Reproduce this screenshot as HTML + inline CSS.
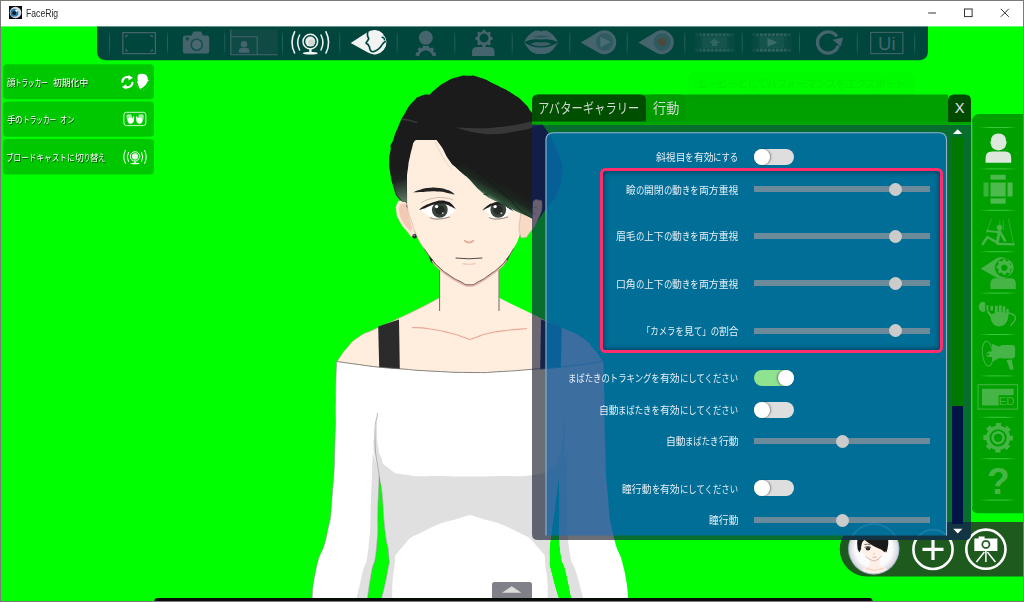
<!DOCTYPE html>
<html lang="ja">
<head>
<meta charset="utf-8">
<title>FaceRig</title>
<style>
html,body{margin:0;padding:0;}
body{width:1024px;height:602px;position:relative;overflow:hidden;background:#00ff00;font-family:"Liberation Sans","Noto Sans CJK JP",sans-serif;}
.abs{position:absolute;}
#title{left:25.6px;top:5.6px;font-size:11px;color:#2a2a2a;line-height:14px;white-space:nowrap;transform-origin:left center;transform:scaleX(0.785);}
.ltxt{left:7px;font-size:9px;line-height:11px;color:#fff;white-space:nowrap;text-shadow:0.8px 0.8px 0 #0f3a0f;}
.pc{display:inline-block;white-space:pre;vertical-align:top;}
.pc>span{display:inline-block;transform-origin:left center;white-space:pre;}
#dialog{left:0;top:0;width:1024px;height:602px;}
.jp{font-family:"Liberation Sans","Noto Sans CJK JP",sans-serif;}
.tab{position:absolute;top:99px;font-size:14px;line-height:18px;color:#d2dad2;white-space:nowrap;transform-origin:left center;}
#closex{left:948.2px;top:99px;width:23px;text-align:center;font-size:14.6px;line-height:18px;color:#e6e6e6;}
#tip{left:697.7px;top:77.3px;font-size:11px;line-height:14px;color:#00ec00;white-space:nowrap;transform-origin:left center;transform:scaleX(0.9);}
#hl{left:599.5px;top:168px;width:343px;height:184.5px;box-sizing:border-box;border:3.4px solid #ff2d6c;border-radius:5.5px;box-shadow:inset 0 0 5px 1px rgba(0,20,50,.55);}
.row{position:absolute;right:285.6px;font-size:10.3px;line-height:12px;color:#e6eff5;white-space:nowrap;transform-origin:right center;}
.track{position:absolute;left:754px;width:176px;height:6px;background:#6b8b9a;}
.knob{position:absolute;width:13px;height:13px;border-radius:50%;background:#cbcbcb;}
.tog{position:absolute;left:754px;width:40px;height:16px;border-radius:8px;background:#dedede;}
.tog.on{background:#8fe28f;}
.tog i{position:absolute;top:0;width:16px;height:16px;border-radius:50%;background:#fff;box-shadow:1px 0 2px rgba(0,0,0,.4);}
.tog.on i{box-shadow:-1px 0 2px rgba(0,0,0,.4);}
</style>
</head>
<body>
<!-- SCENE -->
<svg class="abs" id="scene" style="left:0;top:0" width="1024" height="602" viewBox="0 0 1024 602">
<defs>
<linearGradient id="hairfade" gradientUnits="userSpaceOnUse" x1="396" y1="170" x2="405" y2="201"><stop offset="0" stop-color="#1b1b1b"/><stop offset="0.3" stop-color="#1d211e"/><stop offset="1" stop-color="#5a7862"/></linearGradient>
<linearGradient id="hairfade2" gradientUnits="userSpaceOnUse" x1="0" y1="195" x2="0" y2="220"><stop offset="0" stop-color="#1b1b1b"/><stop offset="0.3" stop-color="#1b1b1b"/><stop offset="1" stop-color="#4a6650"/></linearGradient>
<linearGradient id="bandfade" gradientUnits="userSpaceOnUse" x1="510" y1="187" x2="500" y2="205"><stop offset="0" stop-color="#1b1b1b"/><stop offset="0.45" stop-color="#1c261f"/><stop offset="0.8" stop-color="#244630" stop-opacity="0.96"/><stop offset="1" stop-color="#386a48" stop-opacity="0.7"/></linearGradient>
<filter id="fBody" x="0" y="0" width="100%" height="100%" color-interpolation-filters="sRGB"><feColorMatrix type="matrix" values="0.39 0 0 0 0.03  0 0.35 0 0 0.08  0.14 -0.08 0.14 0 0.26  0 0 0 1 0"/></filter>
<filter id="fPanel" x="0" y="0" width="100%" height="100%" color-interpolation-filters="sRGB"><feColorMatrix type="matrix" values="0.235 0 0 0 0  0 0.06 0 0 0.372  0.04 0 0 0 0.588  0 0 0 1 0"/></filter>
<clipPath id="cBody"><path d="M532 124.4 H971 V534 Q971 540 965 540 H538 Q532 540 532 534 Z"/></clipPath>
<clipPath id="cPanel"><path d="M545.5 535.5 V140.3 Q545.5 132.3 553.5 132.3 H939 Q947 132.3 947 140.3 V535.5 Z"/></clipPath>
<clipPath id="thumbclip"><circle cx="873.8" cy="548.8" r="25"/></clipPath>
<radialGradient id="thumbbg" gradientUnits="userSpaceOnUse" cx="873.8" cy="548.8" r="25.6"><stop offset="0" stop-color="#ffffff"/><stop offset="0.72" stop-color="#fbfbfb"/><stop offset="1" stop-color="#cfd0d8"/></radialGradient>
<g id="bbar">
<!-- ============ BOTTOM BAR ============ -->
<path id="bbarbg" d="M867 522 H1024 V576.5 H867 A27.25 27.25 0 0 1 867 522 Z" fill="#1e5a1e"/>
<!-- overlap of dialog over bottom bar -->
<!-- thumb -->
<circle cx="873.8" cy="548.8" r="25.6" fill="url(#thumbbg)"/>
<g clip-path="url(#thumbclip)">
<path d="M853 582 Q855 570.5 865.5 567.8 L869.7 564.8 V556 H879.6 V564.8 L883.8 567.8 Q894 570.5 896 582 Z" fill="#fdeee6"/>
<path d="M866 568.6 Q871 569 874.6 570.6 Q878 569 883.5 568.6" fill="none" stroke="#eeb4a4" stroke-width="0.6"/>
<path d="M857.6 549 Q855.5 537 862 531.5 Q868 526.5 876 527.5 Q885 529.5 888 538 Q889 545 886.4 552.5 L884 549 L861 549 L859.4 552.5 Z" fill="#1a1a1a"/>
<path d="M860.8 540 V547 Q861.6 552.4 865.6 556.6 Q870 560.4 874.4 561 Q878.8 559.6 881.6 556 Q884.6 551.6 884.9 546 V540 Z" fill="#fff0e8"/>
<path d="M865.6 556.6 Q870 560.4 874.4 561 Q878.8 559.6 881.6 556" fill="none" stroke="#b08070" stroke-width="0.5"/>
<path d="M859.6 551 L858.2 544 Q858.6 538 863 537.4 L864.8 540 Q861.8 541 861.4 546 Z" fill="#1a1a1a"/>
<path d="M863 537.6 Q872 536 884.9 539 L886.8 546 L885.2 552.6 Q883.6 551.4 881.2 549.4 Q872.5 546.4 865 540.2 Z" fill="#1a1a1a"/>
<ellipse cx="868" cy="548.8" rx="2.3" ry="1.7" fill="#2a2a2a"/>
<path d="M864.6 547.4 Q867.6 545.6 871 547.4" fill="none" stroke="#222" stroke-width="0.8"/>
<path d="M864.4 544.6 Q867.6 543.6 870.6 544.8" fill="none" stroke="#333" stroke-width="0.7"/>
<path d="M873.2 553.6 Q874 554.4 874.8 553.6" fill="none" stroke="#e8a090" stroke-width="0.8"/>
<path d="M872.6 557.2 H876.6" stroke="#c08878" stroke-width="0.6"/>
</g>
<circle cx="873.8" cy="548.8" r="25.2" fill="none" stroke="#6a86c0" stroke-width="0.8" opacity="0.6"/>
<!-- plus -->
<circle cx="933" cy="549.4" r="19.6" fill="none" stroke="#fff" stroke-width="2.6"/>
<path d="M922.5 549.4 H943.5 M933 538.9 V559.9" stroke="#fff" stroke-width="3.2" fill="none"/>
<!-- camera tripod -->
<circle cx="985.9" cy="549.2" r="19.6" fill="none" stroke="#fff" stroke-width="2.6"/>
<path fill-rule="evenodd" d="M974.3 538.4 H978.6 V536.4 H984.6 V538.4 H997.4 V551 H974.3 Z M985.9 540 a4.4 4.4 0 1 0 0.01 0 z" fill="#fff"/>
<circle cx="985.9" cy="544.4" r="2.7" fill="#fff"/>
<path d="M985.9 551 V562 M984.4 552 L976.4 562 M987.4 552 L995.4 562" stroke="#fff" stroke-width="1.5" fill="none"/>
</g>
<g id="avatar">
<path d="M336.6 361.0 C336.6 361.0 336.0 372.7 335.5 399.0 C335.0 425.3 336.1 408.3 335.0 440.0 C333.9 471.7 335.0 462.7 332.3 494.0 C329.6 525.3 332.3 509.0 326.9 534.0 C321.5 559.0 321.0 546.3 316.0 569.0 C311.0 591.7 312.0 602.0 312.0 602.0 C312.0 602.0 367.0 602.0 367.0 602.0 C367.0 602.0 368.0 592.6 371.2 574.4 C374.4 556.2 374.3 570.0 376.6 547.5 C378.9 525.0 377.1 530.7 378.0 507.0 C378.9 483.3 379.3 476.3 379.3 476.3 C379.3 476.3 380.2 476.3 382.0 493.8 C383.8 511.3 382.5 508.1 384.7 528.7 C386.9 549.3 387.8 541.3 388.7 555.6 C389.6 569.9 390.1 556.2 387.4 571.7 C384.7 587.2 380.6 602.0 380.6 602.0 C380.6 602.0 560.0 602.0 560.0 602.0 C560.0 602.0 555.5 590.3 552.0 575.0 C548.5 559.7 549.5 571.4 549.5 556.0 C549.5 540.6 550.2 545.0 552.0 528.7 C553.8 512.4 552.7 524.5 555.0 507.0 C557.3 489.5 559.0 476.3 559.0 476.3 C559.0 476.3 559.2 483.3 559.5 507.0 C559.8 530.7 557.7 525.0 560.0 547.5 C562.3 570.0 562.5 556.2 566.5 574.4 C570.5 592.6 572.0 602.0 572.0 602.0 C572.0 602.0 628.0 602.0 628.0 602.0 C628.0 602.0 629.0 591.7 624.0 569.0 C619.0 546.3 618.5 559.0 613.1 534.0 C607.7 509.0 610.4 525.3 607.7 494.0 C605.0 462.7 606.1 471.7 605.0 440.0 C603.9 408.3 605.0 425.3 604.5 399.0 C604.0 372.7 603.4 361.0 603.4 361.0 C603.4 361.0 593.8 363.2 570.0 366.0 C546.2 368.8 555.3 367.4 532.0 369.3 C508.7 371.2 520.3 370.5 500.0 371.6 C479.7 372.7 494.3 372.7 471.0 372.5 C447.7 372.3 453.7 372.2 430.0 371.0 C406.3 369.8 417.3 370.1 400.0 368.8 C382.7 367.5 393.0 368.6 378.0 367.0 C363.0 365.4 368.8 366.0 355.0 364.0 C341.2 362.0 336.6 361.0 336.6 361.0 Z" fill="#ffffff"/>
<path d="M377.6 413.0 C377.6 413.0 376.7 420.3 377.0 432.0 C377.3 443.7 377.3 440.0 378.5 448.0 C379.7 456.0 377.2 449.3 380.6 456.0 C384.0 462.7 379.7 461.9 388.7 468.2 C397.7 474.5 390.4 472.4 407.5 475.0 C424.6 477.6 419.2 475.5 440.0 476.0 C460.8 476.5 450.0 476.5 470.0 476.5 C490.0 476.5 479.2 476.5 500.0 476.0 C520.8 475.5 515.4 477.6 532.5 475.0 C549.6 472.4 542.3 474.5 551.3 468.2 C560.3 461.9 556.0 462.7 559.4 456.0 C562.8 449.3 560.3 456.0 561.5 448.0 C562.7 440.0 562.7 443.7 563.0 432.0 C563.3 420.3 562.4 413.0 562.4 413.0 C562.4 413.0 565.0 421.0 565.0 440.0 C565.0 459.0 564.5 457.9 562.5 470.0 C560.5 482.1 559.0 476.3 559.0 476.3 C559.0 476.3 557.3 489.5 555.0 507.0 C552.7 524.5 553.8 512.4 552.0 528.7 C550.2 545.0 549.5 540.6 549.5 556.0 C549.5 571.4 548.5 559.7 552.0 575.0 C555.5 590.3 560.0 602.0 560.0 602.0 C560.0 602.0 547.3 602.0 547.3 602.0 C547.3 602.0 549.1 587.2 546.0 569.0 C542.9 550.8 548.8 560.5 538.0 547.5 C527.2 534.5 533.0 539.8 513.7 530.0 C494.4 520.2 494.6 522.8 480.0 518.0 C465.4 513.2 470.0 515.5 470.0 515.5 C470.0 515.5 474.6 513.2 460.0 518.0 C445.4 522.8 445.6 520.2 426.3 530.0 C407.0 539.8 412.8 534.5 402.0 547.5 C391.2 560.5 397.1 550.8 394.0 569.0 C390.9 587.2 392.7 602.0 392.7 602.0 C392.7 602.0 380.6 602.0 380.6 602.0 C380.6 602.0 384.7 587.2 387.4 571.7 C390.1 556.2 389.6 569.9 388.7 555.6 C387.8 541.3 386.9 549.3 384.7 528.7 C382.5 508.1 383.8 511.3 382.0 493.8 C380.2 476.3 379.3 476.3 379.3 476.3 C379.3 476.3 377.9 469.4 376.0 460.0 C374.1 450.6 373.8 457.3 373.5 448.0 C373.2 438.7 373.6 443.7 375.0 432.0 C376.4 420.3 377.6 413.0 377.6 413.0 Z" fill="#e0e0e0"/>
<path d="M372.6 453.4 C372.6 453.4 373.8 454.4 376.0 462.0 C378.2 469.6 379.3 476.3 379.3 476.3 C379.3 476.3 378.9 483.3 378.0 507.0 C377.1 530.7 378.9 525.0 376.6 547.5 C374.3 570.0 374.4 556.2 371.2 574.4 C368.0 592.6 367.0 602.0 367.0 602.0 C367.0 602.0 356.0 602.0 356.0 602.0 C356.0 602.0 357.8 593.2 362.0 575.0 C366.2 556.8 365.5 572.5 368.5 547.5 C371.5 522.5 369.6 531.4 371.0 500.0 C372.4 468.6 372.6 453.4 372.6 453.4 Z" fill="#e0e0e0"/>
<path d="M567.4 453.4 C567.4 453.4 565.8 454.4 563.0 462.0 C560.2 469.6 559.0 476.3 559.0 476.3 C559.0 476.3 559.2 483.3 559.5 507.0 C559.8 530.7 557.7 525.0 560.0 547.5 C562.3 570.0 562.5 556.2 566.5 574.4 C570.5 592.6 572.0 602.0 572.0 602.0 C572.0 602.0 584.0 602.0 584.0 602.0 C584.0 602.0 582.0 593.2 577.0 575.0 C572.0 556.8 572.3 572.5 569.0 547.5 C565.7 522.5 567.5 531.4 567.0 500.0 C566.5 468.6 567.4 453.4 567.4 453.4 Z" fill="#e0e0e0"/>
<path d="M336.6 361.0 C336.2 373.7 336.0 372.7 335.5 399.0 C335.0 425.3 336.1 408.3 335.0 440.0 C333.9 471.7 335.0 462.7 332.3 494.0 C329.6 525.3 332.3 509.0 326.9 534.0 C321.5 559.0 321.0 546.3 316.0 569.0 C311.0 591.7 313.3 591.0 312.0 602.0" fill="none" stroke="#8a8a8a" stroke-width="0.6"/>
<path d="M377.6 413.0 C376.7 422.0 374.4 418.9 375.0 440.0 C375.6 461.1 377.0 458.4 379.3 476.3 C381.6 494.2 380.2 476.3 382.0 493.8 C383.8 511.3 382.5 508.1 384.7 528.7 C386.9 549.3 387.8 541.3 388.7 555.6 C389.6 569.9 390.1 556.2 387.4 571.7 C384.7 587.2 382.9 591.9 380.6 602.0" fill="none" stroke="#8a8a8a" stroke-width="0.6"/>
<path d="M379.3 476.3 C378.9 486.5 378.9 483.3 378.0 507.0 C377.1 530.7 378.9 525.0 376.6 547.5 C374.3 570.0 374.4 556.2 371.2 574.4 C368.0 592.6 368.4 592.8 367.0 602.0" fill="none" stroke="#8a8a8a" stroke-width="0.6"/>
<path d="M439.0 262.0 C439.0 262.0 439.0 298.0 439.0 298.0 C439.0 298.0 432.7 301.7 418.0 309.0 C403.3 316.3 409.3 313.3 395.0 320.0 C380.7 326.7 387.3 323.2 375.0 329.0 C362.7 334.8 367.3 331.2 358.0 337.5 C348.7 343.8 352.8 341.7 347.0 348.0 C341.2 354.3 343.8 351.8 340.5 356.5 C337.2 361.2 337.0 362.0 337.0 362.0 C337.0 362.0 341.3 362.7 355.0 364.5 C368.7 366.3 363.0 365.9 378.0 367.5 C393.0 369.1 382.7 368.0 400.0 369.3 C417.3 370.6 406.3 370.3 430.0 371.5 C453.7 372.7 447.7 372.8 471.0 373.0 C494.3 373.2 479.7 373.1 500.0 372.0 C520.3 370.9 508.7 371.6 532.0 369.8 C555.3 368.0 546.3 369.1 570.0 366.5 C593.7 363.9 603.0 362.0 603.0 362.0 C603.0 362.0 602.8 361.2 599.5 356.5 C596.2 351.8 598.8 354.3 593.0 348.0 C587.2 341.7 591.3 343.8 582.0 337.5 C572.7 331.2 577.3 334.8 565.0 329.0 C552.7 323.2 559.3 326.7 545.0 320.0 C530.7 313.3 537.2 316.3 522.0 309.0 C506.8 301.7 499.5 298.0 499.5 298.0 C499.5 298.0 499.5 262.0 499.5 262.0 C499.5 262.0 439.0 262.0 439.0 262.0 Z" fill="#ffeede"/>
<path d="M412.0 327.5 C418.0 328.0 417.3 327.2 430.0 329.0 C442.7 330.8 439.0 330.3 450.0 333.0 C461.0 335.7 456.3 334.8 463.0 337.0 C469.7 339.2 470.0 339.6 470.0 339.6 C470.0 339.6 470.3 339.2 477.0 337.0 C483.7 334.8 479.0 335.3 490.0 333.0 C501.0 330.7 497.7 331.5 510.0 330.0 C522.3 328.5 521.3 329.0 527.0 328.5" fill="none" stroke="#e9a898" stroke-width="1.2"/>
<path d="M439.6 268 V311 M499 262 V311" stroke="#4a4444" stroke-width="0.8" fill="none"/>
<path d="M439.0 298.0 C432.0 301.7 432.7 301.7 418.0 309.0 C403.3 316.3 409.3 313.3 395.0 320.0 C380.7 326.7 387.3 323.2 375.0 329.0 C362.7 334.8 367.3 331.2 358.0 337.5 C348.7 343.8 352.8 341.7 347.0 348.0 C341.2 354.3 343.8 351.8 340.5 356.5 C337.2 361.2 338.2 360.2 337.0 362.0" fill="none" stroke="#c8a090" stroke-width="0.6"/>
<path d="M378.2 326.6 L399 319.6 L399.8 369 L379.2 367.3 Z" fill="#2b2b2b"/>
<path d="M561.8 326.6 L541 319.6 L540.2 369.6 L560.8 367.6 Z" fill="#2b2b2b"/>
<path d="M336.6 361.5 C342.7 362.3 341.2 362.2 355.0 364.0 C368.8 365.8 363.0 365.4 378.0 367.0 C393.0 368.6 382.7 367.5 400.0 368.8 C417.3 370.1 406.3 369.8 430.0 371.0 C453.7 372.2 447.7 372.3 471.0 372.5 C494.3 372.7 479.7 372.7 500.0 371.6 C520.3 370.5 508.7 371.2 532.0 369.3 C555.3 367.4 546.3 368.6 570.0 366.0 C593.7 363.4 592.0 363.0 603.0 361.5" fill="none" stroke="#666" stroke-width="0.8"/>
<path d="M407.0 203.0 C404.2 196.6 405.7 201.7 403.5 200.9 C401.3 200.1 402.5 199.8 400.4 200.7 C398.3 201.6 398.5 199.9 397.2 203.5 C395.9 207.1 395.5 205.5 396.4 211.5 C397.3 217.5 396.2 214.7 399.8 221.4 C403.4 228.1 403.0 226.4 407.2 231.6 C411.4 236.8 409.8 236.2 412.4 237.0 C415.0 237.8 415.1 239.7 415.0 234.0 C414.9 228.3 414.7 230.3 412.0 220.0 C409.3 209.7 409.8 209.4 407.0 203.0 Z" fill="#fbe6da" stroke="#d8b8a8" stroke-width="0.5"/>
<path d="M406.5 206.0 C404.0 200.7 404.8 204.0 402.5 204.2 C400.2 204.4 400.6 203.7 399.6 206.5 C398.6 209.3 398.5 207.9 399.4 212.5 C400.3 217.1 399.3 215.1 402.2 220.4 C405.1 225.7 404.9 225.3 408.0 228.5 C411.1 231.7 410.8 232.8 411.5 230.0 C412.2 227.2 411.7 228.0 410.0 220.0 C408.3 212.0 409.0 211.3 406.5 206.0 Z" fill="#f3c9b3"/>
<circle cx="414.6" cy="236.2" r="2.3" fill="#2a2a2a"/><circle cx="414.2" cy="235.6" r="0.8" fill="#999"/>
<path d="M405.0 201.6 C405.0 201.6 402.2 203.0 398.3 198.0 C394.4 193.0 396.1 195.3 393.3 186.5 C390.5 177.7 391.4 180.1 390.0 171.6 C388.6 163.1 389.2 167.2 389.2 161.0 C389.2 154.8 388.6 160.1 390.0 153.0 C391.4 145.9 390.5 148.6 393.3 139.8 C396.1 131.0 394.4 135.4 398.3 126.5 C402.2 117.6 399.9 121.5 404.9 113.2 C409.9 104.9 407.9 107.4 413.2 101.6 C418.5 95.8 415.2 98.1 420.7 95.9 C426.2 93.7 429.8 94.9 429.8 94.9 C429.8 94.9 429.3 94.3 434.8 89.9 C440.3 85.5 438.7 85.9 446.4 81.6 C454.1 77.3 450.8 78.9 458.0 77.0 C465.2 75.1 460.8 75.6 468.0 75.8 C475.2 76.0 470.3 74.4 479.7 77.5 C489.1 80.6 485.2 79.5 496.3 85.0 C507.4 90.5 503.5 87.9 512.9 94.0 C522.3 100.1 518.0 96.8 524.5 103.2 C531.0 109.6 525.5 104.9 532.3 113.2 C539.1 121.5 537.4 117.1 545.0 128.0 C552.6 138.9 549.5 134.3 555.0 146.0 C560.5 157.7 559.2 153.0 561.5 163.0 C563.8 173.0 563.2 166.3 562.0 176.0 C560.8 185.7 561.7 183.0 558.0 192.0 C554.3 201.0 555.0 197.3 551.0 203.0 C547.0 208.7 550.0 203.7 546.0 209.0 C542.0 214.3 543.7 212.7 539.0 219.0 C534.3 225.3 536.7 222.0 532.0 228.0 C527.3 234.0 525.0 237.0 525.0 237.0 C525.0 237.0 520.0 222.0 520.0 222.0 C520.0 222.0 493.3 224.3 460.0 222.0 C426.7 219.7 437.7 221.0 420.0 215.0 C402.3 209.0 407.0 204.0 407.0 204.0 C407.0 204.0 405.0 201.6 405.0 201.6 Z" fill="#1b1b1b"/>
<path d="M427 250 L436.5 266 L431 262 L428.4 255 Z M511 250 L501.5 266 L506 263 L509.5 256 Z" fill="#1b1b1b"/>
<path d="M407.0 140.0 C407.0 140.0 406.8 170.3 407.0 193.0 C407.2 215.7 406.2 199.0 407.6 208.0 C409.0 217.0 408.2 211.0 411.2 220.0 C414.2 229.0 412.3 225.5 416.5 235.0 C420.7 244.5 418.7 240.2 423.9 248.4 C429.1 256.6 427.2 253.4 432.2 259.6 C437.2 265.8 433.2 261.9 438.9 267.1 C444.6 272.3 442.4 270.6 449.4 275.3 C456.4 280.0 453.1 278.1 459.8 281.3 C466.5 284.5 463.0 284.8 469.5 284.8 C476.0 284.8 472.6 284.7 479.3 281.3 C486.0 277.9 483.0 279.3 489.7 274.6 C496.4 269.9 493.8 272.3 499.5 267.1 C505.2 261.9 502.2 265.1 506.9 258.9 C511.6 252.7 509.4 256.4 513.7 248.4 C518.0 240.4 516.5 244.5 519.7 235.0 C522.9 225.5 521.8 251.7 523.2 220.0 C524.6 188.3 524.0 140.0 524.0 140.0 C524.0 140.0 407.0 140.0 407.0 140.0 Z" fill="#ffeede"/>
<path d="M432.2 261.0 C434.4 263.5 433.2 263.3 438.9 268.5 C444.6 273.7 442.4 272.0 449.4 276.7 C456.4 281.4 453.1 279.5 459.8 282.7 C466.5 285.9 463.0 286.2 469.5 286.2 C476.0 286.2 472.6 286.1 479.3 282.7 C486.0 279.3 483.0 280.7 489.7 276.0 C496.4 271.3 493.8 273.7 499.5 268.5 C505.2 263.3 504.4 263.0 506.9 260.3" fill="none" stroke="#e8b8a8" stroke-width="1.6"/>
<path d="M423.9 248.4 C426.7 252.1 427.2 253.4 432.2 259.6 C437.2 265.8 433.2 261.9 438.9 267.1 C444.6 272.3 442.4 270.6 449.4 275.3 C456.4 280.0 453.1 278.1 459.8 281.3 C466.5 284.5 463.0 284.8 469.5 284.8 C476.0 284.8 472.6 284.7 479.3 281.3 C486.0 277.9 483.0 279.3 489.7 274.6 C496.4 269.9 493.8 272.3 499.5 267.1 C505.2 261.9 502.2 265.1 506.9 258.9 C511.6 252.7 511.4 251.9 513.7 248.4" fill="none" stroke="#5a403c" stroke-width="0.9"/>
<path d="M407.0 193.0 C407.2 198.0 406.2 199.0 407.6 208.0 C409.0 217.0 408.2 211.0 411.2 220.0 C414.2 229.0 412.3 225.5 416.5 235.0 C420.7 244.5 421.4 243.9 423.9 248.4" fill="none" stroke="#d8b0a0" stroke-width="0.6"/>
<path d="M390.6 171.6 C390.6 171.6 389.8 167.2 390.0 161.0 C390.2 154.8 389.6 160.1 391.2 153.0 C392.8 145.9 386.5 148.1 394.8 139.8 C403.1 131.5 416.0 128.0 416.0 128.0 C416.0 128.0 415.2 133.5 413.2 143.0 C411.2 152.5 411.7 148.5 410.0 156.4 C408.3 164.3 409.3 157.7 408.2 166.6 C407.1 175.5 407.2 171.2 406.8 183.0 C406.4 194.8 407.0 202.0 407.0 202.0 C407.0 202.0 405.0 201.8 405.0 201.8 C405.0 201.8 402.6 202.7 398.9 197.6 C395.2 192.5 396.8 195.2 394.0 186.5 C391.2 177.8 390.6 171.6 390.6 171.6 Z" fill="url(#hairfade)"/>
<path d="M524.0 204.0 C528.0 197.8 527.4 202.8 532.0 201.5 C536.6 200.2 534.5 198.9 537.8 200.0 C541.1 201.1 542.0 198.2 542.0 204.8 C542.0 211.4 542.0 210.4 537.8 219.8 C533.6 229.2 533.9 227.1 529.5 233.0 C525.1 238.9 527.7 237.2 524.5 237.5 C521.3 237.8 521.5 239.8 520.0 234.0 C518.5 228.2 518.7 230.0 520.0 220.0 C521.3 210.0 520.0 210.2 524.0 204.0 Z" fill="#f7d9c6" stroke="#caa898" stroke-width="0.6"/>
<path d="M528 209 Q534 205.5 537.5 208.5 M530 214 Q533 212 535.5 213.5" fill="none" stroke="#b89080" stroke-width="0.8"/>
<path d="M413.2 143.0 C413.2 143.0 414.7 140.1 419.0 138.0 C423.3 135.9 421.3 137.1 426.0 136.6 C430.7 136.1 433.0 136.4 433.0 136.4 C433.0 136.4 435.7 138.1 441.0 146.0 C446.3 153.9 443.7 152.5 449.0 160.0 C454.3 167.5 451.2 163.0 457.0 168.5 C462.8 174.0 466.4 176.6 466.4 176.6 C466.4 176.6 464.1 172.5 472.0 174.0 C479.9 175.5 477.3 175.5 490.0 181.0 C502.7 186.5 496.7 184.2 510.0 190.5 C523.3 196.8 522.5 196.8 530.0 200.0 C537.5 203.2 532.5 200.0 532.5 200.0 C532.5 200.0 532.2 198.0 537.0 194.0 C541.8 190.0 541.0 192.7 547.0 188.0 C553.0 183.3 551.2 186.0 555.0 180.0 C558.8 174.0 557.7 176.7 558.5 170.0 C559.3 163.3 560.0 168.0 557.5 160.0 C555.0 152.0 556.5 156.7 551.0 146.0 C545.5 135.3 548.7 138.9 541.0 128.0 C533.3 117.1 539.0 123.9 528.0 113.2 C517.0 102.5 524.1 106.7 508.0 96.0 C491.9 85.3 499.7 84.7 479.7 81.0 C459.7 77.3 466.2 79.0 448.0 85.0 C429.8 91.0 438.3 88.0 425.0 99.0 C411.7 110.0 416.0 106.0 408.0 118.0 C400.0 130.0 401.0 135.0 401.0 135.0 C401.0 135.0 413.2 143.0 413.2 143.0 Z" fill="#1b1b1b"/>
<path d="M455.6 127.3 C455.6 127.3 461.9 128.1 475.0 128.2 C488.1 128.3 481.7 128.6 495.0 127.5 C508.3 126.4 502.7 127.1 515.0 125.0 C527.3 122.9 532.0 121.3 532.0 121.3 C532.0 121.3 534.7 119.3 540.0 119.5 C545.3 119.7 548.0 122.0 548.0 122.0 C548.0 122.0 546.0 123.8 535.0 127.0 C524.0 130.2 528.3 129.2 515.0 131.5 C501.7 133.8 506.7 133.4 495.0 134.0 C483.3 134.6 489.7 134.4 480.0 133.2 C470.3 132.0 474.1 132.5 466.0 130.5 C457.9 128.5 455.6 127.3 455.6 127.3 Z" fill="#383838"/>
<path d="M401.6 119 Q409 119.6 417.4 122.6" fill="none" stroke="#3a3a3a" stroke-width="1.4"/>
<path d="M434.8 141.4 C436.5 144.9 436.3 145.1 440.0 152.0 C443.7 158.9 442.0 156.0 446.0 162.0 C450.0 168.0 450.0 167.3 452.0 170.0" fill="none" stroke="#d8c8bc" stroke-width="0.6"/>
<path d="M413.0 192.4 C413.0 192.4 415.4 190.9 421.0 189.4 C426.6 187.9 424.5 188.3 429.8 187.8 C435.1 187.3 431.6 187.3 437.0 187.8 C442.4 188.3 441.2 188.1 446.0 189.4 C450.8 190.7 448.6 190.0 451.5 191.8 C454.4 193.6 454.6 194.8 454.6 194.8 C454.6 194.8 451.9 193.9 446.4 192.8 C440.9 191.7 443.5 192.1 438.0 191.6 C432.5 191.1 435.5 191.3 429.8 191.4 C424.1 191.5 426.6 191.7 421.0 192.0 C415.4 192.3 413.0 192.4 413.0 192.4 Z" fill="#242424"/>
<path d="M483 194.2 L489 196.6 L486.5 192.6 Z" fill="#242424"/>
<path d="M420.5 209.4 C420.5 209.4 423.7 206.7 430.5 204.2 C437.3 201.7 434.1 201.7 440.8 202.0 C447.5 202.3 445.7 202.5 450.6 205.0 C455.5 207.5 455.6 209.6 455.6 209.6 C455.6 209.6 454.2 212.5 449.6 215.5 C445.0 218.5 447.7 217.9 441.8 218.6 C435.9 219.3 437.2 219.3 431.8 217.6 C426.4 215.9 429.3 216.3 425.5 213.6 C421.7 210.9 420.5 209.4 420.5 209.4 Z" fill="#ffffff"/>
<circle cx="439.8" cy="209.8" r="7.9" fill="#3a443c"/>
<circle cx="439.8" cy="210" r="4.6" fill="#242a26"/>
<circle cx="436.6" cy="206.6" r="1.7" fill="#ffffff"/>
<circle cx="442.8" cy="213.2" r="0.9" fill="#c8d0c8"/>
<path d="M419.0 210.0 C419.0 210.0 420.4 208.2 424.0 206.0 C427.6 203.8 425.8 204.9 429.8 203.4 C433.8 201.9 432.1 202.3 436.0 201.4 C439.9 200.5 437.8 200.5 441.5 200.6 C445.2 200.7 443.7 200.5 447.0 201.6 C450.3 202.7 448.5 201.2 451.4 203.8 C454.3 206.4 455.8 209.4 455.8 209.4 C455.8 209.4 454.3 208.3 451.0 206.6 C447.7 204.9 449.3 205.4 446.0 204.4 C442.7 203.4 444.7 203.7 441.0 203.6 C437.3 203.5 438.7 203.4 435.0 204.2 C431.3 205.0 433.5 204.5 429.8 206.0 C426.1 207.5 427.6 207.3 424.0 208.6 C420.4 209.9 419.0 210.0 419.0 210.0 Z" fill="#1e1e1e"/>
<path d="M429.8 217.6 C432.5 218.1 431.3 219.2 438.0 219.0 C444.7 218.8 445.9 217.7 449.8 217.0" fill="none" stroke="#5a4a44" stroke-width="0.7"/>
<path d="M421.5 202.4 C425.0 201.1 424.5 200.1 432.0 198.6 C439.5 197.1 437.0 197.3 444.0 197.8 C451.0 198.3 450.0 199.3 453.0 200.0" fill="none" stroke="#b89888" stroke-width="0.6"/>
<path d="M484.0 209.4 C484.0 209.4 488.9 206.7 494.0 204.2 C499.1 201.7 494.6 201.7 499.3 202.0 C504.0 202.3 503.4 202.5 508.0 205.0 C512.6 207.5 513.0 209.6 513.0 209.6 C513.0 209.6 511.2 212.5 507.0 215.5 C502.8 218.5 505.9 217.9 500.3 218.6 C494.7 219.3 494.1 219.3 490.3 217.6 C486.5 215.9 491.1 216.3 489.0 213.6 C486.9 210.9 484.0 209.4 484.0 209.4 Z" fill="#ffffff"/>
<circle cx="498.3" cy="209.8" r="7.9" fill="#3a443c"/>
<circle cx="498.3" cy="210" r="4.6" fill="#242a26"/>
<circle cx="495.1" cy="206.6" r="1.7" fill="#ffffff"/>
<circle cx="501.3" cy="213.2" r="0.9" fill="#c8d0c8"/>
<path d="M482.6 210.4 C482.6 210.4 483.5 208.5 487.0 206.0 C490.5 203.5 489.3 204.3 493.0 203.0 C496.7 201.7 494.7 202.1 498.0 202.0 C501.3 201.9 499.7 201.4 503.0 202.6 C506.3 203.8 504.5 202.6 508.0 205.6 C511.5 208.6 513.4 211.6 513.4 211.6 C513.4 211.6 511.5 210.0 508.0 208.0 C504.5 206.0 506.3 206.7 503.0 205.6 C499.7 204.5 501.3 204.8 498.0 204.8 C494.7 204.8 496.3 204.6 493.0 205.6 C489.7 206.6 491.5 206.2 488.0 207.8 C484.5 209.4 482.6 210.4 482.6 210.4 Z" fill="#1e1e1e"/>
<path d="M489.0 217.6 C491.7 218.1 490.7 219.2 497.0 219.0 C503.3 218.8 504.3 217.7 508.0 217.0" fill="none" stroke="#5a4a44" stroke-width="0.7"/>
<path d="M457.0 168.5 C457.0 168.5 457.7 168.4 466.4 176.6 C475.1 184.8 473.0 184.9 483.0 193.2 C493.0 201.5 486.3 196.0 496.3 201.5 C506.3 207.0 501.8 204.5 512.9 209.8 C524.0 215.1 523.0 214.2 529.5 217.3 C536.0 220.4 532.5 219.0 532.5 219.0 C532.5 219.0 533.0 199.0 533.0 199.0 C533.0 199.0 538.3 201.2 531.0 197.5 C523.7 193.8 524.3 194.3 511.0 188.0 C497.7 181.7 503.7 184.3 491.0 178.5 C478.3 172.7 482.3 175.7 473.0 170.5 C463.7 165.3 463.0 163.0 463.0 163.0 C463.0 163.0 457.0 168.5 457.0 168.5 Z" fill="url(#bandfade)"/>
<path d="M476.0 172.0 C479.8 174.7 477.3 171.8 487.5 180.0 C497.7 188.2 496.0 186.8 506.6 196.5 C517.2 206.2 510.8 202.0 519.3 209.2 C527.8 216.4 527.8 215.1 532.0 218.0" fill="none" stroke="#101410" stroke-width="0.7" opacity="0.85"/>
<path d="M464.6 240.6 Q469 244.8 473.4 240.6" fill="none" stroke="#eaa696" stroke-width="1.7" stroke-linecap="round"/>
<path d="M455.6 258 Q469 259.6 482.4 258" fill="none" stroke="#54484a" stroke-width="1"/>
<path d="M462.5 263.6 Q469 264.8 475.5 263.6" fill="none" stroke="#f0c4b4" stroke-width="1.1"/>
</g>
</defs>
<use href="#avatar"/><use href="#bbar"/>
<!-- dialog body (recoloured scene) -->
<g clip-path="url(#cBody)"><g filter="url(#fBody)"><rect x="520" y="110" width="470" height="440" fill="#00ff00"/><use href="#avatar"/><use href="#bbarbg"/></g></g>
<!-- scrollbar -->
<rect x="952" y="137" width="11" height="269" fill="#007800"/>
<rect x="952" y="406" width="11" height="118" fill="#001446"/>
<path d="M953 134 L962.4 134 L957.7 129.3 Z" fill="#fff"/>
<path d="M953.2 528.8 L962.4 528.8 L957.8 533.6 Z" fill="#fff"/>
<!-- blue panel (recoloured scene) -->
<g clip-path="url(#cPanel)"><g filter="url(#fPanel)"><rect x="540" y="128" width="412" height="412" fill="#00ff00"/><use href="#avatar"/></g><circle cx="873.8" cy="549" r="25" fill="none" stroke="#5a9ad0" stroke-width="1.4" opacity="0.35"/><circle cx="933" cy="549.4" r="19.6" fill="none" stroke="#5a9ad0" stroke-width="2" opacity="0.3"/></g>
<path d="M546 535.5 V140.3 Q546 132.8 553.5 132.8 H939 Q946.5 132.8 946.5 140.3 V535.5" fill="none" stroke="#8fb4c8" stroke-width="1.1"/>
<!-- dialog header -->
<path d="M538 94.5 H948 V124.4 H532 V100.5 Q532 94.5 538 94.5 Z" fill="#00a000"/>
<rect x="532" y="121.6" width="439" height="2.8" fill="#00a600"/>
<path d="M532 121.6 V100.5 Q532 94.5 538 94.5 H640 Q646 94.5 646 100.5 V121.6 Z" fill="#004f00"/>
<path d="M646 121.6 V100.5 Q646 94.5 652 94.5 H680 Q686 94.5 686 100.5 V121.6 Z" fill="#009a00"/>
<path d="M948 122 V100.5 Q948 94.5 954 94.5 H965 Q971 94.5 971 100.5 V122 Z" fill="#004b00"/>
</svg>

<!-- TITLE BAR -->

<!-- UI SVG -->
<svg class="abs" id="ui" style="left:0;top:0" width="1024" height="602" viewBox="0 0 1024 602">
<defs>
<linearGradient id="sepg" x1="0" y1="0" x2="0" y2="1"><stop offset="0" stop-color="#1f6258" stop-opacity="0"/><stop offset="0.3" stop-color="#1f6258"/><stop offset="0.7" stop-color="#1f6258"/><stop offset="1" stop-color="#1f6258" stop-opacity="0"/></linearGradient>
<linearGradient id="sepsb" x1="0" y1="0" x2="1" y2="0"><stop offset="0" stop-color="#3cc83c" stop-opacity="0"/><stop offset="0.3" stop-color="#3cc83c"/><stop offset="0.7" stop-color="#3cc83c"/><stop offset="1" stop-color="#3cc83c" stop-opacity="0"/></linearGradient>
<linearGradient id="filmfade" x1="0" y1="0" x2="1" y2="0"><stop offset="0" stop-color="#fff" stop-opacity="0"/><stop offset="0.25" stop-color="#fff"/><stop offset="0.75" stop-color="#fff"/><stop offset="1" stop-color="#fff" stop-opacity="0"/></linearGradient>
<mask id="filmmask1"><rect x="692" y="30" width="46" height="26" fill="url(#filmfade)"/></mask>
<mask id="filmmask2"><rect x="749" y="30" width="46" height="26" fill="url(#filmfade)"/></mask>
</defs>
<!-- ============ TOOLBAR ============ -->
<path d="M97 26 H928 V51 Q928 60.2 919 60.2 H106 Q97 60.2 97 51 Z" fill="#00463c"/>
<g id="tbseps" fill="url(#sepg)">
<rect x="109" y="30" width="1" height="26"/><rect x="167" y="30" width="1" height="26"/><rect x="224.3" y="30" width="1" height="26"/><rect x="282" y="30" width="1" height="26"/><rect x="339.3" y="30" width="1" height="26"/><rect x="396.7" y="30" width="1" height="26"/><rect x="454.3" y="30" width="1" height="26"/><rect x="511.7" y="30" width="1" height="26"/><rect x="569.3" y="30" width="1" height="26"/><rect x="626.7" y="30" width="1" height="26"/><rect x="684.3" y="30" width="1" height="26"/><rect x="741.7" y="30" width="1" height="26"/><rect x="799" y="30" width="1" height="26"/><rect x="856.8" y="30" width="1" height="26"/><rect x="914.2" y="30" width="1" height="26"/>
</g>
<!-- 1 fullscreen -->
<g fill="none" stroke="#46646e">
<rect x="122.8" y="32.6" width="32.6" height="21" stroke-width="1.2"/>
</g>
<g fill="#46646e">
<path d="M125.5 35 h3 l-3 3 z M152.7 35 h-3 l3 3 z M125.5 51.5 h3 l-3 -3 z M152.7 51.5 h-3 l3 -3 z"/>
</g>
<!-- 2 camera -->
<path d="M185.5 35.4 H191.5 L193.5 31.6 H201 L203 35.4 H206.6 Q209.2 35.4 209.2 38 V51 Q209.2 53.6 206.6 53.6 H185.5 Q182.9 53.6 182.9 51 V38 Q182.9 35.4 185.5 35.4 Z" fill="#46646e"/>
<circle cx="196.7" cy="44.8" r="6.4" fill="#17504a"/>
<circle cx="196.7" cy="44.8" r="4.7" fill="#4a6872"/>
<circle cx="187.3" cy="38.8" r="1.9" fill="#17504a"/>
<!-- 3 pip -->
<rect x="230.3" y="29.5" width="47.5" height="25.8" fill="#0f4a45"/>
<path d="M230.8 29.5 V54.8 H277.8" fill="none" stroke="#46646e" stroke-width="1.1"/>
<path d="M230.8 36.8 H257.2 V54.8" fill="none" stroke="#46646e" stroke-width="1.1"/>
<circle cx="244" cy="44.2" r="3.3" fill="#46646e"/>
<path d="M239 52.8 V50 Q239 48 241.5 48 H246.8 Q249.3 48 249.3 50 V52.8 Z" fill="#46646e"/>
<!-- 4 webcam broadcast (active) -->
<g fill="none" stroke="#f0f4f2" stroke-linecap="round">
<path d="M294.6 31.8 Q289.4 42.4 294.6 53" stroke-width="1.6"/>
<path d="M299.6 35 Q295.8 42.4 299.6 50" stroke-width="1.5"/>
<path d="M326 31.8 Q331.2 42.4 326 53" stroke-width="1.6"/>
<path d="M321 35 Q324.8 42.4 321 50" stroke-width="1.5"/>
<circle cx="310.3" cy="41.6" r="7.3" stroke-width="1.5"/>
</g>
<circle cx="310.3" cy="41.6" r="5" fill="#e6eae8"/>
<circle cx="311.5" cy="42.6" r="3" fill="#cfd5d3"/>
<path d="M309.2 48.8 H311.6 V52 H309.2 Z" fill="#f0f4f2"/>
<ellipse cx="310.3" cy="53.2" rx="7.6" ry="1.4" fill="#f0f4f2"/>
<!-- 5 face teardrop (active) -->
<path d="M350.7 42.9 L366.9 32.5 A12.2 12.2 0 1 1 367.9 52.6 Z" fill="#f2f4f3"/>
<path d="M367.9 31.2 Q367 34 367.7 36.5 L368.8 38.7 Q367.6 41 366 43 Q367 44.2 368 44.4 Q368.6 46 369.5 47 Q369.6 49.4 370.6 50.6 Q371.8 52 373.5 51.7 Q376 51.2 378 49.4 Q380.6 47.4 382 44.9 Q383.6 42.4 385.8 41.3" fill="none" stroke="#00463c" stroke-width="1.7" stroke-linejoin="round"/>
<path d="M381.6 37.2 Q384.4 37 384.6 40.4" fill="none" stroke="#00463c" stroke-width="1.5"/>
<path d="M383 34.8 L387 38.4 L387 33 Z" fill="#00463c"/>
<!-- 6 person w/ gear -->
<circle cx="425.8" cy="37.7" r="7" fill="#46646e"/>
<path d="M415.3 55.5 L416.2 52.2 L417.8 52.6 L418.6 50.6 L417.3 49.4 L419.4 47.2 L420.8 48.3 L422.8 47.2 L422.6 45.6 L425.8 45.9 L429 45.6 L428.8 47.2 L430.8 48.3 L432.2 47.2 L434.3 49.4 L433 50.6 L433.8 52.6 L435.4 52.2 L436.3 55.5 L432.5 56.3 Q431.5 51 425.8 50.2 Q420 51 419 56.3 Z" fill="#46646e"/>
<!-- 7 gear-head person -->
<g fill="#46646e">
<path d="M472 55.9 V52 Q472 46.9 477.5 46.9 H489 Q494.5 46.9 494.5 52 V55.9 Z"/>
<path fill-rule="evenodd" d="M482.7 29.8 h2.6 l0.5 1.9 l1.7 0.7 l1.7 -1 l1.8 1.8 l-1 1.7 l0.7 1.7 l1.9 0.5 v2.6 l-1.9 0.5 l-0.7 1.7 l1 1.7 l-1.8 1.8 l-1.7 -1 l-1.7 0.7 l-0.5 1.9 h-2.6 l-0.5 -1.9 l-1.7 -0.7 l-1.7 1 l-1.8 -1.8 l1 -1.7 l-0.7 -1.7 l-1.9 -0.5 v-2.6 l1.9 -0.5 l0.7 -1.7 l-1 -1.7 l1.8 -1.8 l1.7 1 l1.7 -0.7 z M484 33.6 a4.4 4.4 0 1 0 0.01 0 z"/>
</g>
<!-- 8 lips -->
<g fill="#46646e">
<path d="M524 42 Q528 34 535 30.8 Q538.5 30 541 31.6 Q543.5 30 547 30.8 Q554 34 558 42 Q552 39.6 547 39.3 Q541 39.6 535 39.3 Q530 39.6 524 42 Z"/>
<path d="M524 42 Q529 52 535 53.6 Q541 54.6 547 53.6 Q553 52 558 42 Q552 47.4 541 47.6 Q530 47.4 524 42 Z"/>
<path d="M530.5 44 Q536 41.2 541 42.4 Q546 41.2 551.5 44 Q546 46.4 541 46.2 Q536 46.4 530.5 44 Z" fill="#3f5e68"/>
<path d="M532 36.6 Q541 34.6 550 36.6 Q541 38.8 532 36.6 Z" fill="#2c5658"/>
</g>
<!-- 9 play teardrop -->
<path d="M580.8 42.4 L599.5 31.2 A12 12 0 1 1 599.5 53.2 Z" fill="#46646e"/>
<circle cx="604.6" cy="42" r="8.7" fill="#2f5a60"/>
<path d="M600.3 36.6 L610.8 42 L600.3 47.4 Z" fill="#4a6a74"/>
<!-- 10 record teardrop -->
<path d="M638.4 42.4 L657 31.2 A12 12 0 1 1 657 53.2 Z" fill="#46646e"/>
<circle cx="662.2" cy="42" r="8.7" fill="#2f5a60"/>
<circle cx="662.2" cy="42" r="4.3" fill="#4c4a3c"/>
<!-- 11 film up -->
<g mask="url(#filmmask1)">
<rect x="694" y="33" width="41" height="19" fill="#0c4e46"/>
<rect x="702.3" y="37" width="24.6" height="11" fill="#14544c"/>
<g fill="#2a6058"><rect x="695" y="33.4" width="2.8" height="2.8"/><rect x="699" y="33.4" width="2.8" height="2.8"/><rect x="703" y="33.4" width="2.8" height="2.8"/><rect x="707" y="33.4" width="2.8" height="2.8"/><rect x="711" y="33.4" width="2.8" height="2.8"/><rect x="715" y="33.4" width="2.8" height="2.8"/><rect x="719" y="33.4" width="2.8" height="2.8"/><rect x="723" y="33.4" width="2.8" height="2.8"/><rect x="727" y="33.4" width="2.8" height="2.8"/><rect x="731" y="33.4" width="2.8" height="2.8"/>
<rect x="695" y="48.8" width="2.8" height="2.8"/><rect x="699" y="48.8" width="2.8" height="2.8"/><rect x="703" y="48.8" width="2.8" height="2.8"/><rect x="707" y="48.8" width="2.8" height="2.8"/><rect x="711" y="48.8" width="2.8" height="2.8"/><rect x="715" y="48.8" width="2.8" height="2.8"/><rect x="719" y="48.8" width="2.8" height="2.8"/><rect x="723" y="48.8" width="2.8" height="2.8"/><rect x="727" y="48.8" width="2.8" height="2.8"/><rect x="731" y="48.8" width="2.8" height="2.8"/></g>
<path d="M714.5 38.5 L720 43 H717.2 V46 H711.8 V43 H709 Z" fill="#2f6660"/>
</g>
<!-- 12 film play -->
<g mask="url(#filmmask2)">
<rect x="751" y="33" width="41" height="19" fill="#0c4e46"/>
<rect x="759.5" y="37" width="24.6" height="11" fill="#14544c"/>
<g fill="#2e645c"><rect x="752" y="33.4" width="2.8" height="2.8"/><rect x="756" y="33.4" width="2.8" height="2.8"/><rect x="760" y="33.4" width="2.8" height="2.8"/><rect x="764" y="33.4" width="2.8" height="2.8"/><rect x="768" y="33.4" width="2.8" height="2.8"/><rect x="772" y="33.4" width="2.8" height="2.8"/><rect x="776" y="33.4" width="2.8" height="2.8"/><rect x="780" y="33.4" width="2.8" height="2.8"/><rect x="784" y="33.4" width="2.8" height="2.8"/><rect x="788" y="33.4" width="2.8" height="2.8"/>
<rect x="752" y="48.8" width="2.8" height="2.8"/><rect x="756" y="48.8" width="2.8" height="2.8"/><rect x="760" y="48.8" width="2.8" height="2.8"/><rect x="764" y="48.8" width="2.8" height="2.8"/><rect x="768" y="48.8" width="2.8" height="2.8"/><rect x="772" y="48.8" width="2.8" height="2.8"/><rect x="776" y="48.8" width="2.8" height="2.8"/><rect x="780" y="48.8" width="2.8" height="2.8"/><rect x="784" y="48.8" width="2.8" height="2.8"/><rect x="788" y="48.8" width="2.8" height="2.8"/></g>
<path d="M767.5 38 L777.5 42.4 L767.5 46.8 Z" fill="#3a6c6a"/>
</g>
<!-- 13 refresh -->
<path d="M836.8 36.4 A10.6 10.6 0 1 0 838.3 45.5" fill="none" stroke="#46646e" stroke-width="3.3"/>
<path d="M832.5 39.8 L843.2 37.4 L840.6 46.6 Z" fill="#46646e"/>
<!-- 14 Ui -->
<rect x="870.7" y="32.4" width="32.2" height="21.2" fill="none" stroke="#46646e" stroke-width="1.1"/>
<text x="886.8" y="49.6" text-anchor="middle" font-family="Liberation Sans, sans-serif" font-size="18.5" fill="#46646e">Ui</text>
<!-- ============ LEFT BUTTONS ============ -->
<rect x="3" y="64.3" width="151" height="35" rx="4" fill="#00c800"/>
<rect x="3" y="101.6" width="151" height="35.1" rx="4" fill="#00c800"/>
<rect x="3" y="139" width="151" height="35.5" rx="4" fill="#00c800"/>
<g fill="none" stroke="#fff" stroke-width="2.1">
<path d="M122.4 82.6 A5 5 0 0 1 129.6 77.6"/>
<path d="M132.4 81.8 A5 5 0 0 1 125.2 86.8"/>
</g>
<path d="M128.4 74.9 L133 77.7 L128.6 80.4 Z M126.4 89.6 L121.8 86.9 L126.2 84.2 Z" fill="#fff"/>
<path d="M137.5 76.2 Q138 74.4 139.4 74 Q142.6 73.4 145.6 74.4 Q147.2 75.6 147.6 77.6 L147.7 79.6 Q149 80.2 148.6 81.2 L147.4 81.6 Q147 83.4 146 84.4 Q143.6 87.4 140.6 88.8 Q139.4 88.4 139 87.2 L138.4 85.2 L137.7 83.8 L138.1 83.2 L136.8 82.5 Q137.4 81.4 137.9 80.6 Q137.4 79.4 137.6 78.4 Z" fill="#fff"/>
<path d="M134.4 77.6 Q136 80 135.2 83.4 Q136.4 88.6 141.6 90.2 Q146.6 90.2 149 85" fill="none" stroke="#3cd23c" stroke-width="0.7" opacity="0.8"/>
<!-- hands -->
<rect x="123.9" y="112.3" width="22" height="13.3" rx="2.6" fill="none" stroke="#fff" stroke-width="1" opacity="0.8"/>
<g fill="#fff">
<ellipse cx="130.5" cy="120.7" rx="2.9" ry="3.1" transform="rotate(-22 130.5 120.7)"/>
<path d="M127 119.8 L126.3 116 Q126.6 114.2 128.4 114.3 L130.6 114.2 Q132 114.8 131.9 116.6 L132 119.4 Z" opacity="0.62"/>
<path d="M131.9 119.4 L133.3 116.3 L134.3 116.7 L133.6 121.2 L132.4 122.4 Z"/>
<ellipse cx="139.7" cy="120.7" rx="2.9" ry="3.1" transform="rotate(22 139.7 120.7)"/>
<path d="M143.2 119.8 L143.9 116 Q143.6 114.2 141.8 114.3 L139.6 114.2 Q138.2 114.8 138.3 116.6 L138.2 119.4 Z" opacity="0.62"/>
<path d="M138.3 119.4 L136.9 116.3 L135.9 116.7 L136.6 121.2 L137.8 122.4 Z"/>
</g>
<!-- small webcam broadcast -->
<g fill="none" stroke="#fff" stroke-linecap="round">
<path d="M125.4 150.4 Q122 157 125.4 163.4" stroke-width="1"/>
<path d="M128.4 152.4 Q126 157 128.4 161.4" stroke-width="1"/>
<path d="M144.6 150.4 Q148 157 144.6 163.4" stroke-width="1"/>
<path d="M141.6 152.4 Q144 157 141.6 161.4" stroke-width="1"/>
<circle cx="135" cy="156.4" r="4.7" stroke-width="1"/>
</g>
<circle cx="135" cy="156.4" r="3.1" fill="#e8f4e8"/>
<path d="M134.4 161 H135.6 V163 H134.4 Z" fill="#fff"/>
<ellipse cx="135" cy="163.5" rx="4.6" ry="0.8" fill="#fff"/>
<!-- ============ SIDEBAR ============ -->
<path d="M980 114 H1024 V513.3 H978 Q972 513.3 972 507.3 V122 Q972 114 980 114 Z" fill="#00a000"/>
<rect x="972" y="122" width="1" height="385" fill="#12b812"/>
<g fill="url(#sepsb)">
<rect x="979" y="127" width="38" height="1"/><rect x="979" y="168.4" width="38" height="1"/><rect x="979" y="209.8" width="38" height="1"/><rect x="979" y="251.2" width="38" height="1"/><rect x="979" y="292.6" width="38" height="1"/><rect x="979" y="334" width="38" height="1"/><rect x="979" y="375.4" width="38" height="1"/><rect x="979" y="416.8" width="38" height="1"/><rect x="979" y="458.2" width="38" height="1"/><rect x="979" y="499.6" width="38" height="1"/>
</g>
<!-- sb1 person (active) -->
<g fill="#dde8dd">
<path d="M991 141 Q991 133.4 998.5 133.4 Q1006 133.4 1006 141 Q1007.4 141.4 1006.2 144 Q1005.4 150 998.5 150.4 Q991.6 150 990.8 144 Q989.6 141.4 991 141 Z"/>
<path d="M985.6 162.8 V158 Q985.6 151.6 992 151.6 H1005 Q1011.2 151.6 1011.2 158 V162.8 Z"/>
</g>
<!-- sb2 layout -->
<g fill="#4cba4c">
<rect x="990.5" y="174.8" width="15.2" height="4.9"/>
<rect x="990.5" y="182.5" width="15.2" height="14"/>
<rect x="983.5" y="182.5" width="5" height="14" opacity="0.75"/>
<rect x="1007.5" y="182.5" width="5.1" height="14"/>
<rect x="990.5" y="198.4" width="15.2" height="5.3"/>
</g>
<!-- sb3 marionette -->
<g fill="none" stroke="#46b446" stroke-linecap="round">
<path d="M991.4 219 L986.5 233 M1008.5 219 L1013.4 243.5 M999.8 220.5 V225 M1003.3 220.5 V230" stroke-width="0.8" opacity="0.8"/>
<path d="M987.4 231 L997.6 232" stroke-width="2"/>
<path d="M999.6 230 L997.2 242.6" stroke-width="3"/>
<path d="M1000 232 L1005 240.6" stroke-width="2.6"/>
<path d="M997.2 242.6 L987.4 237 L982.8 244" stroke-width="2.5" stroke-linejoin="round"/>
<path d="M997.4 243.8 L1013.8 244.4" stroke-width="2.2"/>
</g>
<circle cx="999.5" cy="227.6" r="2.8" fill="#46b446"/>
<!-- sb4 eye-gear person -->
<g fill="#46b446">
<path fill-rule="evenodd" d="M980.6 268.7 L997 258 A10.6 10.6 0 1 1 996.4 277.4 Z M1004.3 258.4 a9.3 9.3 0 1 0 0.01 0 z"/>
<path fill-rule="evenodd" d="M1003.1 259.2 h2.4 l0.5 1.6 l1.5 0.6 l1.5 -0.8 l1.7 1.7 l-0.8 1.5 l0.6 1.5 l1.6 0.5 v2.4 l-1.6 0.5 l-0.6 1.5 l0.8 1.5 l-1.7 1.7 l-1.5 -0.8 l-1.5 0.6 l-0.5 1.6 h-2.4 l-0.5 -1.6 l-1.5 -0.6 l-1.5 0.8 l-1.7 -1.7 l0.8 -1.5 l-0.6 -1.5 l-1.6 -0.5 v-2.4 l1.6 -0.5 l0.6 -1.5 l-0.8 -1.5 l1.7 -1.7 l1.5 0.8 l1.5 -0.6 z M1004.3 264.5 a3.2 3.2 0 1 0 0.01 0 z"/>
<path d="M990.4 289 V283.6 Q990.4 278.2 996 278.2 H1010.2 Q1015.8 278.2 1015.8 283.6 V289 Z"/>
</g>
<!-- sb5 mic hand -->
<g fill="#46b446">
<path d="M985.2 302.4 Q981 300.6 979.2 304.6 Q977.8 309.6 981.4 311.6 Q983.6 312.4 985.2 311 Z"/>
<rect x="986.4" y="305.2" width="2" height="5.4"/>
<rect x="990.4" y="305.8" width="2.6" height="4.8"/>
<path d="M986.6 311.8 L988.4 310.8 L991.6 314.4 L993.6 313.2 L994.9 313.4 L994.9 306.4 Q996.3 304.4 997.7 306.4 L997.7 312 L998.8 312 L998.8 306 Q1000.2 304 1001.6 306 L1001.6 312.2 L1002.6 312.2 L1002.6 307 Q1004 305 1005.4 307 L1005.4 313 L1006.2 313 L1006.4 309.6 Q1007.6 307.8 1008.9 309.4 L1008.4 316 Q1007.8 323 1003 325.6 Q997.6 327.8 993.6 324.6 Q990.8 321.6 990.2 316.4 Z"/>
</g>
<path d="M1008.6 313 Q1015.6 314.6 1015.6 318.4 Q1014.8 321.6 1010.6 325.4" fill="none" stroke="#46b446" stroke-width="1.3" stroke-linecap="round"/>
<!-- sb6 megaphone -->
<g fill="#46b446">
<ellipse cx="987.6" cy="353.8" rx="5.2" ry="12.5" fill="none" stroke="#46b446" stroke-width="1" transform="rotate(-6 987.6 353.8)"/>
<path fill-rule="evenodd" d="M986.6 354.2 Q986.6 351.4 989 351.4 L991.6 351.6 Q992.4 347 991.8 343.4 Q996 345.6 999.8 346.5 Q1001 345.1 1003 345.1 H1012 Q1015.1 345.1 1015.1 348.2 V355.3 Q1015.1 358.4 1012 358.4 H1003 Q1001.6 358.4 1000.5 357.7 Q996.5 359 993.2 361.5 Q992.6 359 991.8 357 L989 357 Q986.6 357 986.6 354.2 Z M988.2 352.8 a0.9 1.5 0 1 0 0.01 0 z"/>
<path d="M1006.4 360.1 L1011.7 359.4 L1013.6 369.2 L1010.2 370 Z"/>
</g>
<!-- sb7 ED -->
<rect x="978" y="384.7" width="39.6" height="24.4" fill="none" stroke="#45b645" stroke-width="1"/>
<path d="M982 388.7 H1013.6 V395.2 H998.6 V405.4 H982 Z" fill="#45b645"/>
<text x="1006.6" y="405.4" text-anchor="middle" font-family="Liberation Sans, sans-serif" font-size="11.4" fill="#46b446">ED</text>
<!-- sb8 gear -->
<g fill="none" stroke="#45b645">
<circle cx="998.1" cy="437.8" r="10.4" stroke-width="3.6"/>
<circle cx="998.1" cy="437.8" r="12.8" stroke-width="4" stroke-dasharray="5.03 5.02" stroke-dashoffset="2.5"/>
<circle cx="998.1" cy="437.8" r="5.4" stroke-width="2.6"/>
</g>
<!-- sb9 ? -->
<text x="998.2" y="493.8" text-anchor="middle" font-family="Liberation Sans, sans-serif" font-weight="bold" font-size="37" fill="#45b645">?</text>
<!-- ============ BOTTOM LINE / TAB ============ -->
<path d="M492 598 V584.4 Q492 581.9 494.5 581.9 H529.5 Q532 581.9 532 584.4 V598 Z" fill="#808088"/>
<path d="M502 592.8 L511.7 586.3 L521.4 592.8 Z" fill="#dcdcdc"/>
<path d="M154.4 602 V601 Q154.4 598.1 157.4 598.1 H869.5 Q872.5 598.1 872.5 601 V602 Z" fill="#060c06"/>
<!-- ============ TITLEBAR ICONS ============ -->
<rect x="0" y="0" width="1024" height="26.4" fill="#fff"/>
<rect x="9" y="6" width="13" height="13" fill="#0a0a14"/>
<circle cx="15.5" cy="12.5" r="5.8" fill="#d8dce0"/>
<circle cx="14.4" cy="12.8" r="4" fill="#2a78a8"/>
<circle cx="14.2" cy="13" r="2" fill="#0a1a2a"/>
<circle cx="16.6" cy="10.6" r="1.2" fill="#fff"/>
<path d="M928.2 13 H936" stroke="#333" stroke-width="1"/>
<rect x="964.5" y="9" width="7.6" height="7.6" fill="none" stroke="#333" stroke-width="1"/>
<path d="M1000.8 8.8 L1008.8 16.8 M1008.8 8.8 L1000.8 16.8" stroke="#333" stroke-width="1"/>
</svg>

<div class="abs" id="title">FaceRig</div>
<!-- LEFT BUTTONS -->
<div class="abs ltxt jp" style="top:77.8px;left:6.8px"><span class="pc" style="width:8.4px"><span style="transform:scaleX(0.933)">顔</span></span><span class="pc" style="width:32.8px"><span style="transform:scaleX(0.729)">トラッカー</span></span><span class="pc" style="width:5.3px"><span style="transform:scaleX(1.000)"> </span></span><span class="pc" style="width:35.2px"><span style="transform:scaleX(0.978)">初期化中</span></span></div>
<div class="abs ltxt jp" style="top:115.2px;left:6.8px"><span class="pc" style="width:8.6px"><span style="transform:scaleX(0.956)">手</span></span><span class="pc" style="width:7.6px"><span style="transform:scaleX(0.844)">の</span></span><span class="pc" style="width:33.2px"><span style="transform:scaleX(0.738)">トラッカー</span></span><span class="pc" style="width:3.6px"><span style="transform:scaleX(1.000)"> </span></span><span class="pc" style="width:14.4px"><span style="transform:scaleX(0.800)">オン</span></span></div>
<div class="abs ltxt jp" style="top:153px;left:6.2px"><span class="pc" style="width:68.6px"><span style="transform:scaleX(0.847)">ブロードキャストに</span></span><span class="pc" style="width:8.9px"><span style="transform:scaleX(0.989)">切</span></span><span class="pc" style="width:6.2px"><span style="transform:scaleX(0.689)">り</span></span><span class="pc" style="width:8.6px"><span style="transform:scaleX(0.956)">替</span></span><span class="pc" style="width:7.3px"><span style="transform:scaleX(0.811)">え</span></span></div>

<div class="abs" style="left:688px;top:72px;width:227px;height:26px;border-radius:6px;background:rgba(0,30,0,0.02)"></div>
<div class="abs jp" id="tip">ムービーとしてパフォーマンスをエクスポート</div>
<!-- DIALOG -->
<div class="abs" id="dialog">
<div class="tab jp" id="tab1" style="left:538px;transform:scaleX(0.808)">アバターギャラリー</div>
<div class="tab jp" id="tab2" style="left:652.8px;transform:scaleX(0.94)">行動</div>
<div class="abs" id="closex">X</div>
<div class="abs" id="hl"></div>
<div class="row jp" id="r0" style="top:152.3px"><span class="pc" style="width:29.58px"><span style="transform:scaleX(0.957)">斜視目</span></span><span class="pc" style="width:8.36px"><span style="transform:scaleX(0.812)">を</span></span><span class="pc" style="width:19.72px"><span style="transform:scaleX(0.957)">有効</span></span><span class="pc" style="width:25.08px"><span style="transform:scaleX(0.812)">にする</span></span></div>
<div class="tog" style="top:149.0px"><i style="left:0"></i></div>
<div class="row jp" id="r1" style="top:184.5px"><span class="pc" style="width:9.86px"><span style="transform:scaleX(0.957)">瞼</span></span><span class="pc" style="width:8.36px"><span style="transform:scaleX(0.812)">の</span></span><span class="pc" style="width:19.72px"><span style="transform:scaleX(0.957)">開閉</span></span><span class="pc" style="width:8.36px"><span style="transform:scaleX(0.812)">の</span></span><span class="pc" style="width:9.86px"><span style="transform:scaleX(0.957)">動</span></span><span class="pc" style="width:16.72px"><span style="transform:scaleX(0.812)">きを</span></span><span class="pc" style="width:39.44px"><span style="transform:scaleX(0.957)">両方重視</span></span></div>
<div class="track" style="top:186.2px"></div><div class="knob" style="left:888.8px;top:182.7px"></div>
<div class="row jp" id="r2" style="top:231.3px"><span class="pc" style="width:19.72px"><span style="transform:scaleX(0.957)">眉毛</span></span><span class="pc" style="width:8.36px"><span style="transform:scaleX(0.812)">の</span></span><span class="pc" style="width:19.72px"><span style="transform:scaleX(0.957)">上下</span></span><span class="pc" style="width:8.36px"><span style="transform:scaleX(0.812)">の</span></span><span class="pc" style="width:9.86px"><span style="transform:scaleX(0.957)">動</span></span><span class="pc" style="width:16.72px"><span style="transform:scaleX(0.812)">きを</span></span><span class="pc" style="width:39.44px"><span style="transform:scaleX(0.957)">両方重視</span></span></div>
<div class="track" style="top:233.0px"></div><div class="knob" style="left:888.8px;top:229.5px"></div>
<div class="row jp" id="r3" style="top:278.6px"><span class="pc" style="width:19.72px"><span style="transform:scaleX(0.957)">口角</span></span><span class="pc" style="width:8.36px"><span style="transform:scaleX(0.812)">の</span></span><span class="pc" style="width:19.72px"><span style="transform:scaleX(0.957)">上下</span></span><span class="pc" style="width:8.36px"><span style="transform:scaleX(0.812)">の</span></span><span class="pc" style="width:9.86px"><span style="transform:scaleX(0.957)">動</span></span><span class="pc" style="width:16.72px"><span style="transform:scaleX(0.812)">きを</span></span><span class="pc" style="width:39.44px"><span style="transform:scaleX(0.957)">両方重視</span></span></div>
<div class="track" style="top:280.3px"></div><div class="knob" style="left:888.8px;top:276.8px"></div>
<div class="row jp" id="r4" style="top:325.9px"><span class="pc" style="width:41.80px"><span style="transform:scaleX(0.812)">「カメラを</span></span><span class="pc" style="width:9.86px"><span style="transform:scaleX(0.957)">見</span></span><span class="pc" style="width:25.08px"><span style="transform:scaleX(0.812)">て」の</span></span><span class="pc" style="width:19.72px"><span style="transform:scaleX(0.957)">割合</span></span></div>
<div class="track" style="top:327.6px"></div><div class="knob" style="left:888.8px;top:324.1px"></div>
<div class="row jp" id="r5" style="top:372.8px"><span class="pc" style="width:91.96px"><span style="transform:scaleX(0.812)">まばたきのトラキングを</span></span><span class="pc" style="width:19.72px"><span style="transform:scaleX(0.957)">有効</span></span><span class="pc" style="width:58.52px"><span style="transform:scaleX(0.812)">にしてください</span></span></div>
<div class="tog on" style="top:369.5px"><i style="left:24px"></i></div>
<div class="row jp" id="r6" style="top:404.8px"><span class="pc" style="width:19.72px"><span style="transform:scaleX(0.957)">自動</span></span><span class="pc" style="width:41.80px"><span style="transform:scaleX(0.812)">まばたきを</span></span><span class="pc" style="width:19.72px"><span style="transform:scaleX(0.957)">有効</span></span><span class="pc" style="width:58.52px"><span style="transform:scaleX(0.812)">にしてください</span></span></div>
<div class="tog" style="top:401.5px"><i style="left:0"></i></div>
<div class="row jp" id="r7" style="top:436.3px"><span class="pc" style="width:19.72px"><span style="transform:scaleX(0.957)">自動</span></span><span class="pc" style="width:33.44px"><span style="transform:scaleX(0.812)">まばたき</span></span><span class="pc" style="width:19.72px"><span style="transform:scaleX(0.957)">行動</span></span></div>
<div class="track" style="top:438.0px"></div><div class="knob" style="left:836.1px;top:434.5px"></div>
<div class="row jp" id="r8" style="top:483.6px"><span class="pc" style="width:29.58px"><span style="transform:scaleX(0.957)">瞳行動</span></span><span class="pc" style="width:8.36px"><span style="transform:scaleX(0.812)">を</span></span><span class="pc" style="width:19.72px"><span style="transform:scaleX(0.957)">有効</span></span><span class="pc" style="width:58.52px"><span style="transform:scaleX(0.812)">にしてください</span></span></div>
<div class="tog" style="top:480.3px"><i style="left:0"></i></div>
<div class="row jp" id="r9" style="top:515.3px"><span class="pc" style="width:29.58px"><span style="transform:scaleX(0.957)">瞳行動</span></span></div>
<div class="track" style="top:517.0px"></div><div class="knob" style="left:836.1px;top:513.5px"></div>
</div>


<!-- WINDOW BORDER -->
<div class="abs" style="left:0;top:0;width:1022px;height:600px;border:1px solid #7b7b7b;pointer-events:none"></div>
</body>
</html>
